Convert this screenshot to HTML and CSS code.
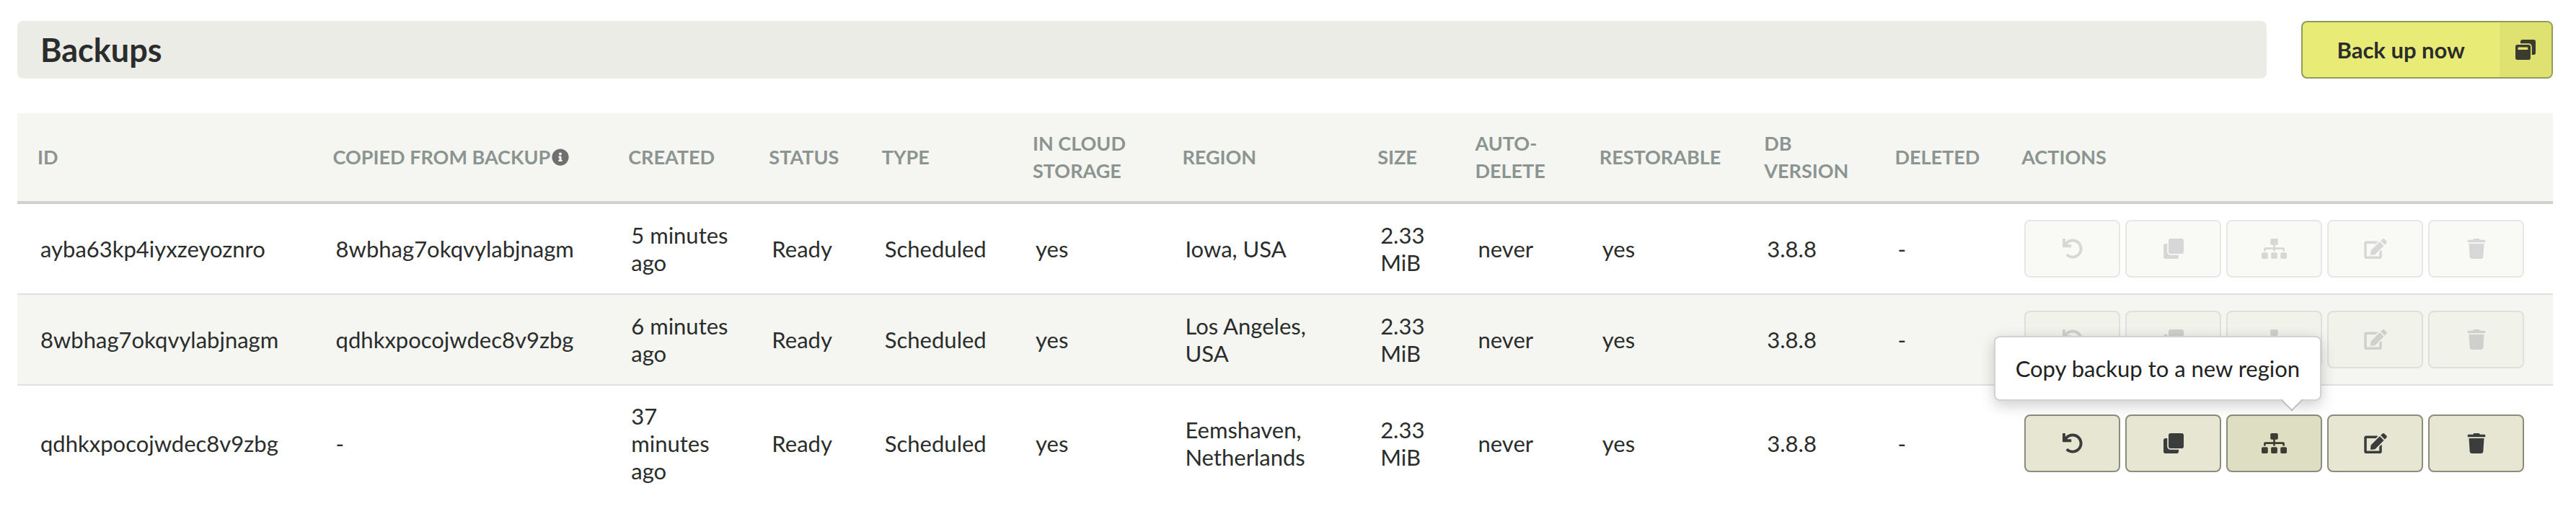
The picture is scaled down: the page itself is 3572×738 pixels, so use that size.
FILE: index.html
```html
<!DOCTYPE html>
<html lang="en">
<head>
<meta charset="utf-8">
<title>Backups</title>
<link rel="stylesheet" href="styles.css">
</head>
<body>
<svg class="sprite" aria-hidden="true">
  <symbol id="i-undo" viewBox="0 0 512 512"><path d="M212.333 224.333H12c-6.627 0-12-5.373-12-12V12C0 5.373 5.373 0 12 0h48c6.627 0 12 5.373 12 12v78.112C117.773 39.279 184.26 7.47 258.175 8.007c136.906.994 246.448 111.623 246.157 248.532C504.041 393.258 393.12 504 256.333 504c-64.089 0-122.496-24.313-166.51-64.215-5.099-4.622-5.334-12.554-.467-17.42l33.967-33.967c4.474-4.474 11.662-4.717 16.401-.525C170.76 415.336 211.58 432 256.333 432c97.268 0 176-78.716 176-176 0-97.267-78.716-176-176-176-58.496 0-110.28 28.476-142.274 72.333h98.274c6.627 0 12 5.373 12 12v48c0 6.627-5.373 12-12 12z"/></symbol>
  <symbol id="i-clone" viewBox="0 0 512 512"><path d="M464 0c26.51 0 48 21.49 48 48v288c0 26.51-21.49 48-48 48H176c-26.51 0-48-21.49-48-48V48c0-26.51 21.49-48 48-48h288M176 416c-44.112 0-80-35.888-80-80V128H48c-26.51 0-48 21.49-48 48v288c0 26.51 21.49 48 48 48h288c26.51 0 48-21.49 48-48v-48H176z"/></symbol>
  <symbol id="i-sitemap" viewBox="0 0 640 512"><path d="M128 352H32c-17.67 0-32 14.33-32 32v96c0 17.67 14.33 32 32 32h96c17.67 0 32-14.33 32-32v-96c0-17.67-14.33-32-32-32zm-24-80h192v48h48v-48h192v48h48v-57.59c0-21.17-17.23-38.41-38.41-38.41H344v-64h40c17.67 0 32-14.33 32-32V32c0-17.67-14.33-32-32-32H256c-17.67 0-32 14.33-32 32v96c0 17.67 14.33 32 32 32h40v64H94.41C73.23 224 56 241.23 56 262.41V320h48v-48zm264 80h-96c-17.67 0-32 14.33-32 32v96c0 17.67 14.33 32 32 32h96c17.67 0 32-14.33 32-32v-96c0-17.67-14.33-32-32-32zm240 0h-96c-17.67 0-32 14.33-32 32v96c0 17.67 14.33 32 32 32h96c17.67 0 32-14.33 32-32v-96c0-17.67-14.33-32-32-32z"/></symbol>
  <symbol id="i-edit" viewBox="0 0 576 512"><path d="M402.6 83.2l90.2 90.2c3.8 3.8 3.8 10 0 13.8L274.4 405.6l-92.8 10.3c-12.4 1.4-22.9-9.1-21.5-21.5l10.3-92.8L388.8 83.2c3.8-3.8 10-3.8 13.8 0zm162-22.9l-48.8-48.8c-15.2-15.2-39.9-15.2-55.2 0l-35.4 35.4c-3.8 3.8-3.8 10 0 13.8l90.2 90.2c3.8 3.8 10 3.8 13.8 0l35.4-35.4c15.2-15.3 15.2-40 0-55.2zM384 346.2V448H64V128h229.8c3.2 0 6.2-1.3 8.5-3.5l40-40c7.6-7.6 2.2-20.5-8.5-20.5H48C21.5 64 0 85.5 0 112v352c0 26.5 21.5 48 48 48h352c26.5 0 48-21.5 48-48V306.2c0-10.7-12.9-16-20.5-8.5l-40 40c-2.2 2.3-3.5 5.3-3.5 8.5z"/></symbol>
  <symbol id="i-trash" viewBox="0 0 448 512"><path d="M432 32H312l-9.4-18.7A24 24 0 0 0 281.1 0H166.8a23.72 23.72 0 0 0-21.4 13.3L136 32H16A16 16 0 0 0 0 48v32a16 16 0 0 0 16 16h416a16 16 0 0 0 16-16V48a16 16 0 0 0-16-16zM53.2 467a48 48 0 0 0 47.9 45h245.8a48 48 0 0 0 47.9-45L416 128H32z"/></symbol>
  <symbol id="i-info" viewBox="0 0 512 512"><path d="M256 8C119.043 8 8 119.083 8 256c0 136.997 111.043 248 248 248s248-111.003 248-248C504 119.083 392.957 8 256 8zm0 110c23.196 0 42 18.804 42 42s-18.804 42-42 42-42-18.804-42-42 18.804-42 42-42zm56 254c0 6.627-5.373 12-12 12h-88c-6.627 0-12-5.373-12-12v-24c0-6.627 5.373-12 12-12h12v-64h-12c-6.627 0-12-5.373-12-12v-24c0-6.627 5.373-12 12-12h64c6.627 0 12 5.373 12 12v100h12c6.627 0 12 5.373 12 12v24z"/></symbol>
  <symbol id="i-restore" viewBox="0 0 512 512"><path d="M512 48v288c0 26.5-21.5 48-48 48h-48V176c0-44.1-35.9-80-80-80H128V48c0-26.5 21.5-48 48-48h288c26.5 0 48 21.5 48 48zM384 176v288c0 26.5-21.5 48-48 48H48c-26.5 0-48-21.5-48-48V176c0-26.5 21.5-48 48-48h288c26.5 0 48 21.5 48 48zm-68 28c0-6.6-5.4-12-12-12H76c-6.6 0-12 5.4-12 12v52h252v-52z"/></symbol>
</svg>

<main class="page">
  <header class="toolbar">
    <h1 class="title">Backups</h1>
    <button class="primary" type="button">
      <span class="primary-label">Back up now</span>
      <span class="primary-icon"><svg class="icon" aria-hidden="true"><use href="#i-restore"/></svg></span>
    </button>
  </header>

  <table class="backups">
    <colgroup>
      <col class="c-id"><col class="c-from"><col class="c-created"><col class="c-status"><col class="c-type"><col class="c-cloud"><col class="c-region"><col class="c-size"><col class="c-auto"><col class="c-restorable"><col class="c-version"><col class="c-deleted"><col class="c-actions">
    </colgroup>
    <thead>
      <tr>
        <th scope="col">ID</th>
        <th scope="col"><span class="with-info">Copied from backup<svg class="icon icon-info" aria-hidden="true"><use href="#i-info"/></svg></span></th>
        <th scope="col">Created</th>
        <th scope="col">Status</th>
        <th scope="col">Type</th>
        <th scope="col">In cloud storage</th>
        <th scope="col">Region</th>
        <th scope="col">Size</th>
        <th scope="col">Auto-delete</th>
        <th scope="col">Restorable</th>
        <th scope="col">DB version</th>
        <th scope="col">Deleted</th>
        <th scope="col">Actions</th>
      </tr>
    </thead>
    <tbody>
      <tr>
        <td>ayba63kp4iyxzeyoznro</td>
        <td>8wbhag7okqvylabjnagm</td>
        <td>5 minutes ago</td>
        <td>Ready</td>
        <td>Scheduled</td>
        <td>yes</td>
        <td>Iowa, USA</td>
        <td>2.33 MiB</td>
        <td>never</td>
        <td>yes</td>
        <td>3.8.8</td>
        <td>-</td>
        <td class="actions-cell">
          <div class="actions">
            <button class="action" type="button" aria-label="Restore" disabled><svg class="icon"><use href="#i-undo"/></svg></button>
            <button class="action" type="button" aria-label="Clone" disabled><svg class="icon"><use href="#i-clone"/></svg></button>
            <button class="action" type="button" aria-label="Copy to region" disabled><svg class="icon icon-wide"><use href="#i-sitemap"/></svg></button>
            <button class="action" type="button" aria-label="Edit" disabled><svg class="icon icon-edit"><use href="#i-edit"/></svg></button>
            <button class="action" type="button" aria-label="Delete" disabled><svg class="icon"><use href="#i-trash"/></svg></button>
          </div>
        </td>
      </tr>
      <tr>
        <td>8wbhag7okqvylabjnagm</td>
        <td>qdhkxpocojwdec8v9zbg</td>
        <td>6 minutes ago</td>
        <td>Ready</td>
        <td>Scheduled</td>
        <td>yes</td>
        <td>Los Angeles, USA</td>
        <td>2.33 MiB</td>
        <td>never</td>
        <td>yes</td>
        <td>3.8.8</td>
        <td>-</td>
        <td class="actions-cell">
          <div class="actions">
            <button class="action" type="button" aria-label="Restore" disabled><svg class="icon"><use href="#i-undo"/></svg></button>
            <button class="action" type="button" aria-label="Clone" disabled><svg class="icon"><use href="#i-clone"/></svg></button>
            <button class="action" type="button" aria-label="Copy to region" disabled><svg class="icon icon-wide"><use href="#i-sitemap"/></svg></button>
            <button class="action" type="button" aria-label="Edit" disabled><svg class="icon icon-edit"><use href="#i-edit"/></svg></button>
            <button class="action" type="button" aria-label="Delete" disabled><svg class="icon"><use href="#i-trash"/></svg></button>
          </div>
        </td>
      </tr>
      <tr>
        <td>qdhkxpocojwdec8v9zbg</td>
        <td>-</td>
        <td>37 minutes ago</td>
        <td>Ready</td>
        <td>Scheduled</td>
        <td>yes</td>
        <td>Eemshaven, Netherlands</td>
        <td>2.33 MiB</td>
        <td>never</td>
        <td>yes</td>
        <td>3.8.8</td>
        <td>-</td>
        <td class="actions-cell">
          <div class="actions">
            <button class="action" type="button" aria-label="Restore"><svg class="icon"><use href="#i-undo"/></svg></button>
            <button class="action" type="button" aria-label="Clone"><svg class="icon"><use href="#i-clone"/></svg></button>
            <div class="tip-anchor">
              <button class="action action-active" type="button" aria-describedby="region-tip" aria-label="Copy to region"><svg class="icon icon-wide"><use href="#i-sitemap"/></svg></button>
              <div class="tooltip" id="region-tip" role="tooltip">Copy backup to a new region</div>
            </div>
            <button class="action" type="button" aria-label="Edit"><svg class="icon icon-edit"><use href="#i-edit"/></svg></button>
            <button class="action" type="button" aria-label="Delete"><svg class="icon"><use href="#i-trash"/></svg></button>
          </div>
        </td>
      </tr>
    </tbody>
  </table>
</main>
</body>
</html>
```

FILE: styles.css
```css
* { box-sizing: border-box; }

body {
  margin: 0;
  background: #fff;
  color: #2b2d2c;
  font-family: Lato, "Open Sans", sans-serif;
  font-size: 31px;
  line-height: 38px;
}

.sprite { display: none; }

.page { padding: 29px 32px 29px 24px; }

.toolbar {
  display: flex;
  gap: 48px;
  margin-bottom: 48px;
}

.title {
  flex: 1;
  margin: 0;
  padding: 0 32px;
  border-radius: 8px;
  background: #ebece6;
  font-size: 45px;
  font-weight: 700;
  line-height: 80px;
}

button {
  padding: 0;
  color: inherit;
  font: inherit;
  cursor: pointer;
}

.primary {
  display: flex;
  height: 80px;
  overflow: hidden;
  border: 2px solid #8f9c5d;
  border-radius: 8px;
  background: #e8eb76;
  font-weight: 700;
}

.primary-label {
  align-self: center;
  padding: 0 48px;
}

.primary-icon {
  display: flex;
  align-items: center;
  justify-content: center;
  align-self: stretch;
  width: 72px;
  background: #dfe170;
  color: #3b3c30;
}

.icon {
  display: block;
  width: 28px;
  height: 28px;
  fill: currentColor;
}

.icon-wide { width: 35px; }
.icon-edit { width: 32px; }

.icon-info {
  width: 24px;
  height: 24px;
  color: #6f6f6f;
}

.backups {
  width: 100%;
  table-layout: fixed;
  border-collapse: separate;
  border-spacing: 0;
}

.c-id, .c-from { width: 11.65%; }
.c-created { width: 5.55%; }
.c-status { width: 4.45%; }
.c-type { width: 5.95%; }
.c-cloud { width: 5.9%; }
.c-region { width: 7.7%; }
.c-size { width: 3.85%; }
.c-auto { width: 4.9%; }
.c-restorable { width: 6.5%; }
.c-version { width: 5.15%; }
.c-deleted { width: 5%; }
.c-actions { width: 21.75%; }

th {
  padding: 23px 20px 23px 28px;
  border-bottom: 4px solid #d0d2cd;
  background: #f5f6f1;
  color: #8c9491;
  font-size: 27px;
  font-weight: 700;
  text-align: left;
  text-transform: uppercase;
}

.with-info {
  display: flex;
  align-items: center;
  gap: 2px;
  white-space: nowrap;
}

td {
  padding: 23px 20px 23px 32px;
  border-bottom: 2px solid #dfe1de;
  vertical-align: middle;
}

tbody tr:nth-child(even) td { background: #f5f6f1; }
tbody tr:last-child td { border-bottom: 0; }

td.actions-cell {
  padding-top: 22px;
  padding-bottom: 22px;
}

.actions {
  display: flex;
  gap: 7px;
}

.action {
  display: flex;
  align-items: center;
  justify-content: center;
  width: 133px;
  height: 80px;
  border: 2px solid #8b8c7b;
  border-radius: 8px;
  background: #e6e6d2;
  color: #3b3d3c;
}

.action:disabled {
  opacity: 0.2;
  cursor: default;
}

.action-active {
  background: #dddec2;
  color: #3d3c32;
}

.tip-anchor { position: relative; }

.tooltip {
  position: absolute;
  right: 1px;
  bottom: calc(100% + 19px);
  padding: 24px 28px;
  border: 2px solid #d2d2d2;
  border-radius: 8px;
  background: #fff;
  box-shadow: 0 6px 20px rgba(0, 0, 0, 0.2);
  color: #222;
  white-space: nowrap;
}

.tooltip::after {
  position: absolute;
  right: 28px;
  bottom: -12px;
  width: 20px;
  height: 20px;
  border: solid #bdbdbd;
  border-width: 0 2px 2px 0;
  background: #fff;
  content: "";
  transform: rotate(45deg);
}
```
